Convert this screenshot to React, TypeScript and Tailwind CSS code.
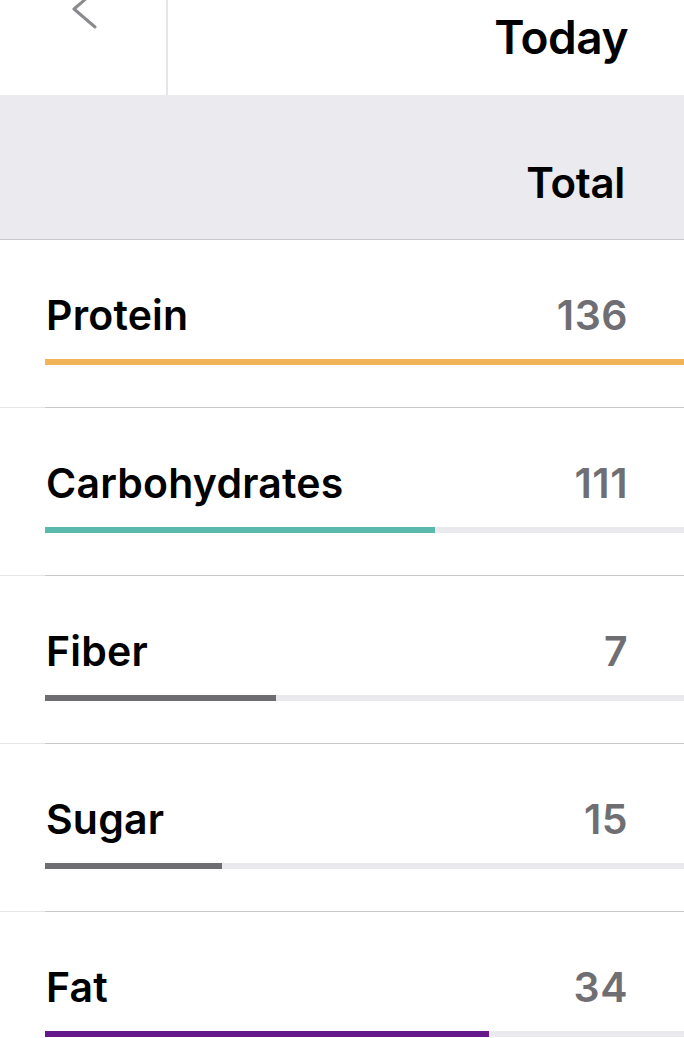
const nutrients = [
  { name: "Protein", value: 136, fill: 100, color: "bg-[#f2b45a]" },
  { name: "Carbohydrates", value: 111, fill: 61, color: "bg-[#5ab8ad]" },
  { name: "Fiber", value: 7, fill: 36.1, color: "bg-[#6d6d72]" },
  { name: "Sugar", value: 15, fill: 27.7, color: "bg-[#6d6d72]" },
  { name: "Fat", value: 34, fill: 69.5, color: "bg-[#66198a]" },
];

function Divider() {
  return (
    <div className="h-px bg-[#e6e6ea]">
      <div className="ml-[45px] h-px bg-[#c8c7cc]" />
    </div>
  );
}

export default function App() {
  return (
    <div
      className="w-[684px] h-[1038px] overflow-hidden bg-white text-black"
      style={{ fontFamily: "Inter, 'Liberation Sans', sans-serif" }}
    >
      {/* HEADER */}
      <header className="flex h-[95px]">
        <div className="w-[168px] h-full border-r-2 border-[#e6e6ea] overflow-hidden">
          <svg width="30" height="42" viewBox="0 0 30 42" className="ml-[70px] -mt-[12px]">
            <path d="M25 3 L4 21 L25 39" fill="none" stroke="#8a8a8e" strokeWidth="3" strokeLinecap="round" strokeLinejoin="round" />
          </svg>
        </div>
        <div className="flex-1 flex justify-end items-start pt-[14px] pr-[56px]">
          <span className="text-[46px] leading-none font-semibold tracking-[-0.5px]">Today</span>
        </div>
      </header>

      {/* COLUMN HEADER */}
      <div className="h-[145px] bg-[#eaeaef] border-b border-[#c8c7cc] flex justify-end items-start pt-[67px] pr-[59px]">
        <span className="text-[42px] leading-none font-semibold tracking-[-0.3px]">Total</span>
      </div>

      {/* ROWS */}
      {nutrients.map((n, i) => (
        <div key={n.name}>
          <div className="h-[167px] pt-[55px]">
            <div className="flex justify-between items-start pl-[46px] pr-[56px]">
              <span className="text-[41px] leading-none font-semibold tracking-[0.2px]">{n.name}</span>
              <span className="text-[41px] leading-none font-semibold text-[#6e6e73] tracking-[0.5px]">{n.value}</span>
            </div>
            <div className="mt-[23px] ml-[45px] h-[6px] bg-[#e9e9ee]">
              <div className={`h-full ${n.color}`} style={{ width: `${n.fill}%` }} />
            </div>
          </div>
          {i < nutrients.length - 1 && <Divider />}
        </div>
      ))}
    </div>
  );
}
